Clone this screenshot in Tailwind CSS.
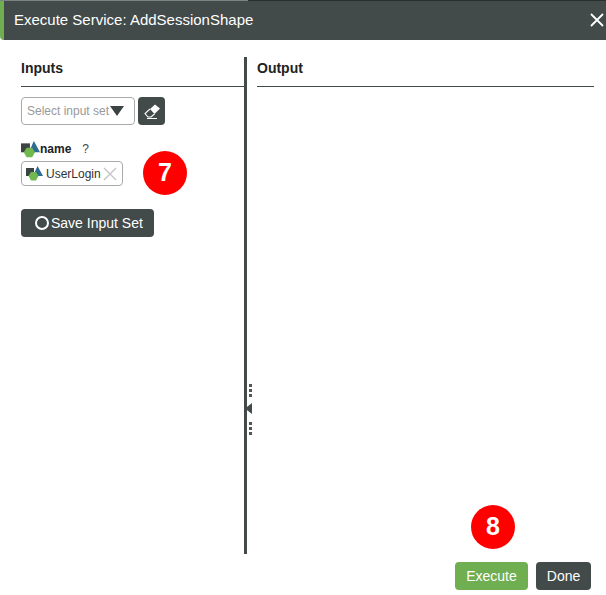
<!DOCTYPE html>
<html lang="en">
<head>
  <meta charset="UTF-8" />
  <script src="https://cdn.jsdelivr.net/npm/@tailwindcss/browser@4"></script>
  <title>Execute Service</title>
</head>
<body class="relative w-[606px] h-[595px] overflow-hidden bg-white text-[#222] font-['Liberation_Sans',Arial,sans-serif]">
  <header class="relative h-10 flex items-center justify-between bg-[#424a4a] border-l-4 border-[#6fae51] pl-[10px] pr-[1px] rounded-bl-sm">
    <div class="absolute left-[-4px] top-0 w-[248px] h-[1px] bg-[#7d8282]"></div>
    <div class="absolute left-[244px] right-0 top-0 h-[1px] bg-[#2a2e2e]"></div>
    <h1 class="text-[15px] text-white">Execute Service: AddSessionShape</h1>
    <svg class="w-[14px] h-[14px] mr-[1px]" viewBox="0 0 14 14" fill="none" stroke="#fff" stroke-width="1.8"><path d="M1 1 13 13M13 1 1 13" /></svg>
  </header>

  <main class="flex h-[497px] mt-[17px]">
    <section class="w-[244px] pl-[21px] shrink-0">
      <h2 class="text-[14px] font-bold leading-[22px] border-b border-[#424a4a] h-[30px]">Inputs</h2>
      <div class="flex gap-[3px] mt-[10px]">
        <div class="w-[114px] h-7 border border-[#aaa] rounded flex items-center pl-[5px] text-[12px] text-[#999]">
          <span>Select input set</span>
          <svg class="w-[14px] h-[10px] ml-[1px]" viewBox="0 0 14 10"><path d="M0 0H14L7 10Z" fill="#3c4343" /></svg>
        </div>
        <button class="w-[27px] h-7 bg-[#424a4a] rounded flex items-center justify-center">
          <svg class="w-[20px] h-[18px] mt-[1px]" viewBox="0 0 20 18" fill="none"><path d="M8 6 13 1.500 18 5.500 12.500 11Z" fill="#fff" /><path d="M8 6 3 10.500 6 14H9L12.500 11M5 15.500H15" stroke="#fff" stroke-width="1.100" /></svg>
        </button>
      </div>
      <div class="flex items-center mt-[15px] h-[18px]">
        <svg class="w-[19px] h-[17px]" viewBox="0 0 17 15"><use href="#shape-icon" /></svg>
        <span class="text-[12px] font-bold">name</span>
        <span class="text-[12px] ml-[11px] text-[#444]">?</span>
      </div>
      <div class="w-[102px] h-[25px] mt-[3px] border border-[#aaa] rounded-sm flex items-center pl-[4px]">
        <svg class="w-[17px] h-[15px] shrink-0" viewBox="0 0 17 15"><use href="#shape-icon" /></svg>
        <span class="text-[12px] ml-[3px] text-[#333]">UserLogin</span>
        <svg class="w-[14px] h-[14px] ml-[2px] shrink-0" viewBox="0 0 14 14" fill="none" stroke="#c4c4c4" stroke-width="1.400"><path d="M1 1 13 13M13 1 1 13" /></svg>
      </div>
      <button class="w-[133px] h-7 mt-[23px] bg-[#424a4a] rounded flex items-center pl-[14px] text-[14px] text-white">
        <span class="w-[14px] h-[14px] rounded-full border-2 border-white mr-[2px]"></span>
        Save Input Set
      </button>
    </section>

    <div class="relative w-[3px] bg-[#424a4a] shrink-0">
      <div class="absolute left-[5px] top-[327px] flex flex-col gap-[2px]">
        <span class="w-[3px] h-[3px] bg-[#555]"></span>
        <span class="w-[3px] h-[3px] bg-[#555]"></span>
        <span class="w-[3px] h-[3px] bg-[#555]"></span>
      </div>
      <svg class="absolute left-[1px] top-[346px] w-[7px] h-[11px]" viewBox="0 0 7 11"><path d="M7 0V11L0 5.500Z" fill="#424a4a" /></svg>
      <div class="absolute left-[5px] top-[365px] flex flex-col gap-[2px]">
        <span class="w-[3px] h-[3px] bg-[#555]"></span>
        <span class="w-[3px] h-[3px] bg-[#555]"></span>
        <span class="w-[3px] h-[3px] bg-[#555]"></span>
      </div>
    </div>

    <section class="flex-1 pl-[10px] pr-[12px]">
      <h2 class="text-[14px] font-bold leading-[22px] border-b border-[#424a4a] h-[30px]">Output</h2>
    </section>
  </main>

  <footer class="flex justify-end gap-[8px] pr-[15px] mt-[8px]">
    <button class="w-[73px] h-7 bg-[#6fae51] rounded text-[14px] text-white">Execute</button>
    <button class="w-[55px] h-7 bg-[#424a4a] rounded text-[14px] text-white">Done</button>
  </footer>

  <div class="absolute left-[143px] top-[151px] w-11 h-11 rounded-full bg-[#fe0000] text-white text-[25px] font-bold flex items-center justify-center">7</div>
  <div class="absolute left-[471px] top-[505px] w-11 h-11 rounded-full bg-[#fe0000] text-white text-[25px] font-bold flex items-center justify-center">8</div>

  <svg class="hidden">
    <symbol id="shape-icon" viewBox="0 0 17 15">
      <path d="M0 2H8V10H0Z" fill="#3c4343" />
      <path d="M11.500 0 17 10H7Z" fill="#2c6b94" />
      <path d="M5 6H10L12.500 10 10 14.500H5L2.500 10Z" fill="#71b84e" />
    </symbol>
  </svg>
</body>
</html>
